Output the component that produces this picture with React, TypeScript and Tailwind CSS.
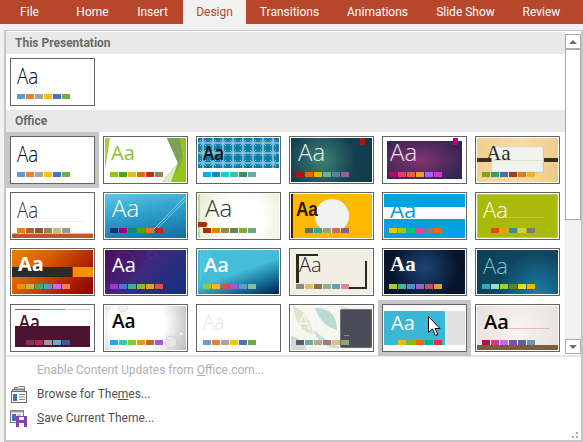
import React from "react";

type T = {
  bg: string;
  aa: string;
  sw: string[];
  swx?: string;
  art?: React.ReactNode;
  over?: React.ReactNode;
  sel?: boolean;
};

function Art({ children }: { children: React.ReactNode }) {
  return (
    <svg viewBox="0 0 81 44" className="absolute inset-0 h-[44px] w-[81px]">
      {children}
    </svg>
  );
}

function Thumb({ t }: { t: T }) {
  return (
    <div className={t.sel ? "relative m-[-4px] bg-[#c6c6c6] p-[4px]" : "relative"}>
      <div className="h-[48px] w-[85px] border border-[#646464] bg-white p-[1px]">
        <div className={`relative flex h-[44px] w-[81px] flex-col ${t.bg}`}>
          {t.art && <Art>{t.art}</Art>}
          <span className={`relative block h-[34px] shrink-0 origin-left leading-none ${t.aa}`}>Aa</span>
          <div className={`relative flex gap-[1px] ${t.swx || "pl-[5px]"}`}>
            {t.sw.map((c, i) => (
              <div key={i} className="h-[5px] w-[8px]" style={{ background: c }} />
            ))}
          </div>
          {t.over && <Art>{t.over}</Art>}
        </div>
      </div>
    </div>
  );
}

const office = ["#5b9bd5", "#ed7d31", "#a5a5a5", "#ffc000", "#4472c4", "#70ad47"];

const current: T = {
  bg: "bg-white",
  aa: "pl-[6px] pt-[4px] font-['Open_Sans',sans-serif] text-[22px] font-light text-[#000] scale-x-[.85]",
  sw: office,
};

const themes: T[] = [
  { ...current, sel: true },
  {
    bg: "bg-white",
    aa: "pl-[6px] pt-[5px] font-['Open_Sans',sans-serif] text-[20px] font-normal text-[#90c226]",
    sw: ["#90c226", "#54a021", "#e6b91e", "#e76618", "#c42f1a", "#918655"],
    art: (
      <>
        <polygon points="0,0 5,0 1,26 0,30" fill="#a4cf3a" />
        <polygon points="62,0 81,0 81,44 57,44 73,25" fill="#7fb23a" />
        <polygon points="62,0 74,0 78,18 73,25" fill="#7d9f5c" />
        <polygon points="75,0 81,0 81,44 66,44 78,22" fill="#94c41e" />
        <polygon points="57,44 73,25 66,44" fill="#dbe9bd" />
      </>
    ),
  },
  {
    bg: "bg-white",
    aa: "pl-[6px] pt-[5px] font-['Open_Sans',sans-serif] text-[20px] font-semibold text-[#111] scale-x-[.85]",
    sw: ["#00b0f0", "#1e86c8", "#0fd0d8", "#40bf9f", "#3f8f5f", "#6aa8a8"],
    art: (
      <>
        <defs>
          <pattern id="stars" width="10" height="10" patternUnits="userSpaceOnUse">
            <rect width="10" height="10" fill="#1784ad" />
            <path d="M5 0V10M0 5H10" stroke="#cfe8f0" strokeWidth="1" />
            <path d="M2 2L8 8M8 2L2 8" stroke="#8cc6da" strokeWidth=".8" />
            <circle cx="0" cy="0" r="2.2" fill="#0a77a3" />
            <circle cx="10" cy="0" r="2.2" fill="#0a77a3" />
            <circle cx="0" cy="10" r="2.2" fill="#0a77a3" />
            <circle cx="10" cy="10" r="2.2" fill="#0a77a3" />
          </pattern>
        </defs>
        <rect width="81" height="30" fill="url(#stars)" />
      </>
    ),
  },
  {
    bg: "bg-[radial-gradient(circle_at_38%_50%,#3f8272,#123f50_62%,#103a4c)]",
    aa: "pl-[7px] pt-[2px] font-['Open_Sans',sans-serif] text-[24px] font-light text-[#e4efee]",
    sw: ["#b31500", "#f06400", "#e6b800", "#6fb08e", "#54859f", "#a35c9b"],
    art: <rect x="69" width="5" height="7" fill="#b31500" />,
  },
  {
    bg: "bg-white",
    aa: "pl-[6px] pt-[2px] font-['Open_Sans',sans-serif] text-[24px] font-light text-[#eee6ee]",
    sw: ["#b8006e", "#e8386e", "#e8603c", "#ee9a2e", "#a067f0", "#d932d9"],
    art: (
      <>
        <defs>
          <radialGradient id="plum" cx=".42" cy=".5" r=".6">
            <stop offset="0" stopColor="#84326f" />
            <stop offset="1" stopColor="#3a2656" />
          </radialGradient>
        </defs>
        <rect x="3" y="3" width="75" height="38" fill="url(#plum)" />
        <rect x="69" width="5" height="7" fill="#b8006e" />
      </>
    ),
  },
  {
    bg: "bg-[linear-gradient(100deg,#f0d090,#f5dca8_50%,#eecb85)]",
    aa: "pl-[9px] pt-[5px] font-['Liberation_Serif',serif] text-[21px] font-normal text-[#2a2a2a]",
    sw: ["#87a01c", "#2e9d72", "#42719f", "#a03a2e", "#dd7a17", "#e0b52d"],
    art: (
      <>
        <rect y="20" width="81" height="4" fill="#3b3226" />
        <rect x="16" y="9" width="51" height="26" fill="#c9b58a" />
        <rect x="15" y="9" width="51" height="25" fill="#f2f2ef" stroke="#e2dfcb" />
        <rect x="15" y="22" width="51" height="1" fill="#e3e2cf" />
      </>
    ),
  },
  {
    bg: "bg-white",
    aa: "pl-[6px] pt-[4px] font-['Open_Sans',sans-serif] text-[22px] font-light text-[#333] scale-x-[.85]",
    sw: ["#e48312", "#bd582c", "#865640", "#9b8357", "#c2bc80", "#94a088"],
    art: (
      <>
        <rect x="8" y="27" width="66" height="1" fill="#eee" />
        <rect y="39" width="81" height="1" fill="#e0b8a0" />
        <rect y="40" width="81" height="4" fill="#bd582c" />
      </>
    ),
  },
  {
    bg: "bg-[linear-gradient(170deg,#5ac8e8,#2e9fcc_45%,#0e6fa0)]",
    aa: "pl-[7px] pt-[2px] font-['Open_Sans',sans-serif] text-[24px] font-light text-white",
    sw: ["#003a6c", "#9c007f", "#008c82", "#5fa000", "#e87722", "#d01c1c"],
    art: (
      <>
        <path d="M48 36L80 3" stroke="#a7e3f2" strokeWidth=".8" />
        <path d="M51 36L81 6" stroke="#8fd6ec" strokeWidth=".8" />
      </>
    ),
  },
  {
    bg: "bg-[radial-gradient(circle_at_55%_55%,#fff_40%,#e7ebca)]",
    aa: "pl-[7px] pt-[2px] font-['Open_Sans',sans-serif] text-[24px] font-light text-[#333]",
    sw: ["#ad2c00", "#e18400", "#9c8546", "#6e8049", "#8da83e", "#63a98a"],
    art: (
      <>
        <rect width="2" height="44" fill="#cdd2ae" />
        <path d="M0 28H8Q11 30 8 33H0Z" fill="#ad2c00" />
        <path d="M5 33Q8 40 12 44M5 27Q7 22 12 18" stroke="#d8cfb0" strokeWidth=".7" fill="none" />
      </>
    ),
  },
  {
    bg: "bg-[#ffb800]",
    aa: "pl-[6px] pt-[4px] font-['Liberation_Sans',sans-serif] text-[21px] font-bold text-[#2a1a00] scale-x-[.82]",
    sw: ["#6b6b4c", "#2fa6a6", "#8fa86a", "#d8655c", "#8d5b7c"],
    swx: "pl-[14px]",
    art: (
      <>
        <rect width="2" height="44" fill="#3a2400" />
        <circle cx="41" cy="22" r="17" fill="#f2f2f2" />
      </>
    ),
  },
  {
    bg: "bg-[linear-gradient(#00a0e3_0_13px,#fff_13px_25px,#00a0e3_25px)]",
    aa: "pl-[6px] pt-[4px] font-['Open_Sans',sans-serif] text-[22px] font-normal text-[#00a0e3]",
    sw: ["#ffc000", "#a2cc00", "#00cc77", "#f03ca0", "#808080", "#ff6a00"],
  },
  {
    bg: "bg-[#a9ba0b]",
    aa: "pl-[6px] pt-[4px] font-['Open_Sans',sans-serif] text-[22px] font-light text-white",
    sw: ["#e04c10", "#f39c00", "#3d88a8", "#d4d436", "#7a7a7a"],
    swx: "pl-[14px]",
    art: (
      <>
        <rect x=".5" y=".5" width="80" height="43" fill="none" stroke="#c2cd4e" />
        <rect x="29" y="23" width="39" height="1" fill="#b9c637" />
      </>
    ),
  },
  {
    bg: "bg-[linear-gradient(135deg,#f07f00,#d85d00_35%,#b02400_70%,#8a0000)]",
    aa: "pl-[6px] pt-[4px] font-['Open_Sans',sans-serif] text-[20px] font-bold text-white",
    sw: ["#f29200", "#c4b252", "#38ad6e", "#4aa0c4", "#c96cf0", "#ff7950"],
    art: (
      <>
        <rect y="17" width="60" height="10" fill="#2b2b2b" />
        <rect x="61" y="17" width="20" height="10" fill="#f29200" />
      </>
    ),
  },
  {
    bg: "bg-[linear-gradient(135deg,#530a5e,#3a2a80_50%,#0e327c)]",
    aa: "pl-[7px] pt-[5px] font-['Open_Sans',sans-serif] text-[20px] font-normal text-white",
    sw: ["#ac33c8", "#4a72d8", "#38b096", "#8eb83c", "#e0a41e", "#e84e40"],
    art: (
      <>
        <circle cx="47" cy="5" r="4" fill="none" stroke="#6d3a8a" strokeWidth=".5" />
        <circle cx="20" cy="11" r="9" fill="none" stroke="#6d3a8a" strokeWidth=".5" />
        <circle cx="8" cy="38" r="6" fill="none" stroke="#4a3a90" strokeWidth=".5" />
      </>
    ),
  },
  {
    bg: "bg-[linear-gradient(160deg,#3ec2dc,#45bcd8_50%,#177aa0_72%,#02204e)]",
    aa: "pl-[6px] pt-[5px] font-['Open_Sans',sans-serif] text-[20px] font-semibold text-white",
    sw: ["#96cc3c", "#fbb224", "#d8533f", "#b252d8", "#5d9cca", "#80bf9d"],
    art: <path d="M3 0V30M6 0V24M9 0V20M12 4V16" stroke="#7fd3e4" strokeWidth=".6" />,
  },
  {
    bg: "bg-[#f2eee4]",
    aa: "pl-[8px] pt-[5px] font-['Open_Sans',sans-serif] text-[20px] font-light text-[#222]",
    sw: ["#8a8a80", "#e4bc60", "#84745a", "#8fae8a", "#709cbc", "#e080a0"],
    art: (
      <>
        <rect x="5" y="4" width="22" height="2" fill="#2a2a1c" />
        <rect x="5" y="4" width="3" height="29" fill="#2a2a1c" />
        <rect x="74" y="11" width="2" height="28" fill="#2a2a1c" />
        <rect x="58" y="37" width="18" height="2" fill="#2a2a1c" />
      </>
    ),
  },
  {
    bg: "bg-[radial-gradient(circle_at_50%_40%,#1c4476,#07152a_70%)]",
    aa: "pl-[6px] pt-[4px] font-['Liberation_Serif',serif] text-[21px] font-bold text-white",
    sw: ["#a6c838", "#3fb8a0", "#4a96cc", "#9a60cc", "#c84c70", "#e0a030"],
  },
  {
    bg: "bg-[radial-gradient(circle_at_75%_100%,#1a7ea8,#0f4560_55%,#0c3f55)]",
    aa: "pl-[6px] pt-[4px] font-['Open_Sans',sans-serif] text-[22px] font-light text-[#7ec3d8]",
    sw: ["#30a8c0", "#8fe4c8", "#a2cc3a", "#548236", "#f0d818", "#ffb000"],
  },
  {
    bg: "bg-white",
    aa: "pl-[8px] pt-[6px] font-['Open_Sans',sans-serif] text-[20px] font-semibold text-[#4c1330] scale-x-[.85]",
    sw: ["#8e2c62", "#b22a48", "#9a9aa0", "#5aaed0", "#4456a0"],
    swx: "pl-[14px]",
    art: (
      <>
        <rect x="3" y="3" width="25" height="1" fill="#8a5a70" />
        <rect x="28" y="3" width="26" height="1" fill="#c87ea0" />
        <rect x="55" y="3" width="23" height="1" fill="#c8c8d0" />
        <rect x="3" y="20" width="75" height="21" fill="#4c1330" />
      </>
    ),
  },
  {
    bg: "bg-[radial-gradient(circle_at_40%_40%,#fff_50%,#bbb)]",
    aa: "pl-[7px] pt-[6px] font-['Open_Sans',sans-serif] text-[19px] font-semibold text-black",
    sw: ["#22a5f5", "#3fc8a8", "#8bc240", "#e09a28", "#cd6420", "#a455d8"],
    art: (
      <>
        <circle cx="66" cy="36" r="6" fill="#e6e6e6" stroke="#bbb" strokeWidth=".5" />
        <circle cx="18" cy="1" r="5" fill="#f2f2f2" stroke="#ccc" strokeWidth=".5" />
        <circle cx="76" cy="28" r="2" fill="#f2f2f2" stroke="#bbb" strokeWidth=".5" />
        <circle cx="3" cy="2" r="2" fill="#f2f2f2" stroke="#ccc" strokeWidth=".5" />
      </>
    ),
  },
  {
    bg: "bg-white",
    aa: "pl-[6px] pt-[4px] font-['Open_Sans',sans-serif] text-[22px] font-light text-[#e6e6e6] scale-x-[.85]",
    sw: ["#6a9bcf", "#e57f33", "#a5a5a5", "#f9c20a", "#4f72b8", "#73a84c"],
  },
  {
    bg: "bg-[#f6f7f0]",
    aa: "pl-[6px] pt-[4px] font-['Open_Sans',sans-serif] text-[22px] font-light text-[#fbfbf6]",
    sw: ["#5c5c70", "#72a8a0", "#b0aa84", "#a07878", "#e0c080", "#96a080"],
    art: (
      <>
        <path d="M2 0Q18 6 22 28Q6 26 2 0Z" fill="#dfe3d0" />
        <path d="M24 2Q46 2 46 24Q30 20 24 2Z" fill="#bcd9d6" />
        <path d="M22 24Q38 36 50 42Q30 44 22 24Z" fill="#c8ded8" />
        <path d="M0 30Q12 32 16 44H0Z" fill="#cfdcd0" />
        <path d="M50 0Q60 2 62 4H50Z" fill="#e2e4d4" />
        <rect x="49.5" y="3.5" width="31.5" height="38" rx="1" fill="#4a4c58" stroke="#6f6f78" />
        <rect x="53" y="29" width="5" height="1" fill="#8a8a92" />
      </>
    ),
  },
  {
    bg: "bg-white",
    aa: "pl-[7px] pt-[7px] font-['Open_Sans',sans-serif] text-[20px] font-normal text-white",
    sw: ["#ffb400", "#8fb800", "#f06a00", "#00b09a", "#dc3040"],
    swx: "pl-[14px]",
    sel: true,
    art: (
      <>
        <rect y="5" width="61" height="34" fill="#38b8d6" />
        <rect x="62" y="5" width="19" height="34" fill="#e2e2e2" />
      </>
    ),
    over: (
      <path
        d="M44.5 10.5V26.5L48.5 23L51.5 29.5L54 28.5L51 22.5H56Z"
        fill="#fff"
        stroke="#000"
        strokeWidth="1"
        strokeLinejoin="round"
      />
    ),
  },
  {
    bg: "bg-[radial-gradient(circle_at_50%_50%,#f8f4f2,#e8e2de)]",
    aa: "pl-[7px] pt-[6px] font-['Open_Sans',sans-serif] text-[20px] font-semibold text-black",
    sw: ["#b0144c", "#d83888", "#bc6cf0", "#7a50a8", "#5862a8", "#6898a8"],
    art: (
      <>
        <rect x="29" y="22" width="44" height="1" fill="#e0b8c0" />
        <rect y="39" width="81" height="5" fill="#7d5c3e" />
      </>
    ),
  },
];

function Header({ children }: { children: React.ReactNode }) {
  return (
    <div className="flex h-[22px] items-center bg-[#e9e9e9] pl-[9px] text-[12px] font-bold text-[#6a6a6a]">
      {children}
    </div>
  );
}

function BrowseIcon() {
  return (
    <svg width="17" height="17" viewBox="0 0 17 17">
      <path d="M4.5 1.5H8L9 .5H14.5V3H4.5Z" fill="#fff" stroke="#7a7a7a" />
      <path d="M2.5 3.5H14.5V5H2.5Z" fill="#fff" stroke="#7a7a7a" />
      <rect x="1.5" y="5.5" width="15" height="11" fill="#fff" stroke="#6a6a6a" />
      <rect x="3" y="8" width="4" height="7" fill="#3f6fb5" />
      <path d="M9 8.5h6M9 11h6M9 13.5h6" stroke="#888" />
    </svg>
  );
}

function SaveIcon() {
  return (
    <svg width="17" height="17" viewBox="0 0 17 17">
      <rect x=".5" y=".5" width="13" height="12" fill="#fff" stroke="#777" />
      <rect x=".5" y=".5" width="13" height="2" fill="#999" />
      <rect x="2" y="4" width="4" height="7" fill="#3f6fb5" />
      <path d="M7 5h4M7 7.5h3" stroke="#888" />
      <path d="M6 6h11v11H6z" fill="#8144ac" />
      <rect x="9" y="7" width="5" height="3" fill="#fff" />
      <rect x="9" y="13" width="5" height="4" fill="#fff" />
    </svg>
  );
}

function ScrollBar() {
  return (
    <div className="flex w-[16px] shrink-0 flex-col pt-[3px]">
      <div className="flex h-[14px] shrink-0 items-center justify-center border border-b-0 border-[#ababab] bg-white">
        <div className="h-0 w-0 border-x-[4px] border-b-[4px] border-x-transparent border-b-[#6a6a6a]" />
      </div>
      <div className="h-[172px] shrink-0 border border-t-[2px] border-[#ababab] bg-white" />
      <div className="h-[119px] shrink-0 bg-[#f1f1f1]" />
      <div className="flex h-[15px] shrink-0 items-center justify-center border border-[#ababab] bg-white">
        <div className="h-0 w-0 border-x-[4px] border-t-[4px] border-x-transparent border-t-[#6a6a6a]" />
      </div>
    </div>
  );
}

export default function App() {
  return (
    <div className="h-[442px] w-[583px] overflow-hidden bg-[#f1f1f1] font-['Roboto',sans-serif]">
      <div className="flex h-[24px] bg-[#b7472a] text-[12px] text-white">
        <div className="flex w-[59px] items-center justify-center">File</div>
        <div className="flex w-[67px] items-center justify-center">Home</div>
        <div className="flex w-[57px] items-center justify-center pr-[4px]">Insert</div>
        <div className="flex w-[63px] items-center justify-center bg-[#f1f1f1] text-[#b7472a]">Design</div>
        <div className="flex w-[87px] items-center justify-center">Transitions</div>
        <div className="flex w-[89px] items-center justify-center">Animations</div>
        <div className="flex w-[87px] items-center justify-center">Slide Show</div>
        <div className="flex w-[65px] items-center justify-center">Review</div>
      </div>
      <div className="relative ml-[4px] mt-[6px] h-[412px] w-[579px] border-2 border-t border-[#c6c6c6] bg-white">
        <div className="flex h-[324px]">
          <div className="w-[559px] pt-px">
            <Header>This Presentation</Header>
            <div className="h-[56px] pl-[4px] pt-[4px]">
              <Thumb t={current} />
            </div>
            <Header>Office</Header>
            <div className="grid grid-cols-[repeat(6,85px)] gap-[8px] pl-[4px] pt-[4px]">
              {themes.map((t, i) => (
                <Thumb key={i} t={t} />
              ))}
            </div>
          </div>
          <ScrollBar />
        </div>
        <div className="h-[2px] bg-[#e4e4e4]" />
        <div className="pt-px text-[12px] text-[#505050]">
          <div className="flex h-[24px] items-center pl-[31px] text-[#b1b1b1]">
            <span>
              Enable Content Updates from <u>O</u>ffice.com...
            </span>
          </div>
          <div className="flex h-[24px] items-center">
            <div className="w-[31px] pl-[4px]">
              <BrowseIcon />
            </div>
            <span>
              Browse for The<u>m</u>es...
            </span>
          </div>
          <div className="flex h-[24px] items-center">
            <div className="w-[31px] pl-[4px]">
              <SaveIcon />
            </div>
            <span>
              <u>S</u>ave Current Theme...
            </span>
          </div>
        </div>
        <svg width="6" height="6" viewBox="0 0 6 6" className="absolute bottom-[2px] right-[3px]">
          <rect x="4" width="2" height="2" fill="#aaa" />
          <rect y="4" width="2" height="2" fill="#aaa" />
          <rect x="4" y="4" width="2" height="2" fill="#aaa" />
        </svg>
      </div>
    </div>
  );
}
